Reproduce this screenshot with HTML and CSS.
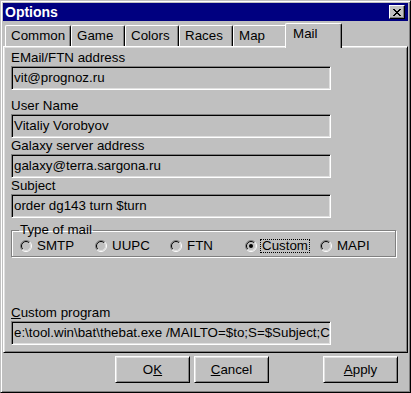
FILE: index.html
```html
<!DOCTYPE html>
<html lang="en">
<head>
  <meta charset="UTF-8">
  <title>Options</title>
  <link rel="stylesheet" href="styles.css">
</head>
<body>
  <div class="window">
    <!-- barra de título -->
    <div class="titlebar">
      <span class="title">Options</span>
      <button class="close">
        <svg width="8" height="7" viewBox="0 0 8 7" shape-rendering="crispEdges">
          <path d="M0 0h2v1h-2zM6 0h2v1h-2zM1 1h2v1h-2zM5 1h2v1h-2zM2 2h4v1h-4zM3 3h2v1h-2zM2 4h4v1h-4zM1 5h2v1h-2zM5 5h2v1h-2zM0 6h2v1h-2zM6 6h2v1h-2z" fill="#000"/>
        </svg>
      </button>
    </div>

    <!-- abas -->
    <div class="tabs">
      <div class="tab">Common</div>
      <div class="tab">Game</div>
      <div class="tab">Colors</div>
      <div class="tab">Races</div>
      <div class="tab">Map</div>
      <div class="tab active">Mail</div>
    </div>

    <div class="panel">
      <div class="label">EMail/FTN address</div>
      <div class="input">vit@prognoz.ru</div>

      <div class="label first-gap">User Name</div>
      <div class="input">Vitaliy Vorobyov</div>

      <div class="label">Galaxy server address</div>
      <div class="input">galaxy@terra.sargona.ru</div>

      <div class="label">Subject</div>
      <div class="input">order dg143 turn $turn</div>

      <fieldset class="group">
        <legend>Type of mail</legend>
        <div class="radios">
          <div class="radio">
            <svg width="12" height="12" viewBox="0 0 12 12">
              <path d="M2.1 9.9A5.5 5.5 0 0 1 9.9 2.1" fill="none" stroke="#808080"/>
              <path d="M9.9 2.1A5.5 5.5 0 0 1 2.1 9.9" fill="none" stroke="#fff"/>
              <path d="M2.8 9.2A4.5 4.5 0 0 1 9.2 2.8" fill="none" stroke="#000"/>
              <path d="M9.2 2.8A4.5 4.5 0 0 1 2.8 9.2" fill="none" stroke="#dfdfdf"/>
            </svg>
            <span>SMTP</span>
          </div>
          <div class="radio">
            <svg width="12" height="12" viewBox="0 0 12 12">
              <path d="M2.1 9.9A5.5 5.5 0 0 1 9.9 2.1" fill="none" stroke="#808080"/>
              <path d="M9.9 2.1A5.5 5.5 0 0 1 2.1 9.9" fill="none" stroke="#fff"/>
              <path d="M2.8 9.2A4.5 4.5 0 0 1 9.2 2.8" fill="none" stroke="#000"/>
              <path d="M9.2 2.8A4.5 4.5 0 0 1 2.8 9.2" fill="none" stroke="#dfdfdf"/>
            </svg>
            <span>UUPC</span>
          </div>
          <div class="radio">
            <svg width="12" height="12" viewBox="0 0 12 12">
              <path d="M2.1 9.9A5.5 5.5 0 0 1 9.9 2.1" fill="none" stroke="#808080"/>
              <path d="M9.9 2.1A5.5 5.5 0 0 1 2.1 9.9" fill="none" stroke="#fff"/>
              <path d="M2.8 9.2A4.5 4.5 0 0 1 9.2 2.8" fill="none" stroke="#000"/>
              <path d="M9.2 2.8A4.5 4.5 0 0 1 2.8 9.2" fill="none" stroke="#dfdfdf"/>
            </svg>
            <span>FTN</span>
          </div>
          <div class="radio">
            <svg width="12" height="12" viewBox="0 0 12 12">
              <path d="M2.1 9.9A5.5 5.5 0 0 1 9.9 2.1" fill="none" stroke="#808080"/>
              <path d="M9.9 2.1A5.5 5.5 0 0 1 2.1 9.9" fill="none" stroke="#fff"/>
              <path d="M2.8 9.2A4.5 4.5 0 0 1 9.2 2.8" fill="none" stroke="#000"/>
              <path d="M9.2 2.8A4.5 4.5 0 0 1 2.8 9.2" fill="none" stroke="#dfdfdf"/>
              <circle cx="6" cy="6" r="2" fill="#000"/>
            </svg>
            <span class="focus">Custom</span>
          </div>
          <div class="radio">
            <svg width="12" height="12" viewBox="0 0 12 12">
              <path d="M2.1 9.9A5.5 5.5 0 0 1 9.9 2.1" fill="none" stroke="#808080"/>
              <path d="M9.9 2.1A5.5 5.5 0 0 1 2.1 9.9" fill="none" stroke="#fff"/>
              <path d="M2.8 9.2A4.5 4.5 0 0 1 9.2 2.8" fill="none" stroke="#000"/>
              <path d="M9.2 2.8A4.5 4.5 0 0 1 2.8 9.2" fill="none" stroke="#dfdfdf"/>
            </svg>
            <span>MAPI</span>
          </div>
        </div>
      </fieldset>

      <div class="label program"><u>C</u>ustom program</div>
      <div class="input">e:\tool.win\bat\thebat.exe /MAILTO=$to;S=$Subject;C</div>
    </div>

    <!-- botões -->
    <div class="buttons">
      <button class="btn">O<u>K</u></button>
      <button class="btn"><u>C</u>ancel</button>
      <button class="btn apply"><u>A</u>pply</button>
    </div>
  </div>
</body>
</html>
```

FILE: styles.css
```css
body {
  margin: 0;
  background: #c0c0c0;
  font-family: "Liberation Sans", Arial, sans-serif;
  font-size: 13.33px;
  color: #000;
}

.window {
  width: 411px;
  height: 393px;
  box-sizing: border-box;
  padding: 2px;
  background: #c0c0c0;
  border: 1px solid;
  border-color: #c0c0c0 #000 #000 #c0c0c0;
  box-shadow: inset 1px 1px #fff, inset -1px -1px #808080;
}

.titlebar {
  height: 18px;
  background: #000080;
  display: flex;
  align-items: flex-start;
  justify-content: space-between;
}

.title {
  color: #fff;
  font-weight: bold;
  font-size: 14px;
  line-height: 18px;
  padding-left: 2px;
}

.close {
  width: 16px;
  height: 14px;
  margin: 2px 3px 0 0;
  padding: 0;
  box-sizing: border-box;
  background: #c0c0c0;
  border: 1px solid;
  border-color: #fff #000 #000 #fff;
  box-shadow: inset -1px -1px #808080;
  display: flex;
  align-items: center;
  justify-content: center;
}

.tabs {
  height: 25px;
  padding-left: 2px;
  display: flex;
  align-items: flex-end;
  position: relative;
  z-index: 1;
}

.tab {
  height: 21px;
  min-width: 54px;
  box-sizing: border-box;
  padding: 0 5px;
  line-height: 20px;
  border-top: 1px solid #fff;
  border-left: 1px solid #fff;
  border-right: 1px solid #000;
  border-radius: 2px 2px 0 0;
  box-shadow: inset -1px 0 #808080;
  background: #c0c0c0;
}

.tab.active {
  height: 25px;
  margin: 0 -2px -2px -2px;
  padding-left: 7px;
  line-height: 19px;
  min-width: 57px;
}

.panel {
  height: 307px;
  box-sizing: border-box;
  padding: 3px 7px 0 7px;
  border: 1px solid;
  border-color: #fff #000 #000 #fff;
  box-shadow: inset 1px 1px #dfdfdf, inset -1px -1px #808080;
}

.label {
  height: 16px;
  line-height: 16px;
}

.label.first-gap {
  margin-top: 8px;
}

.label.program {
  margin-top: 48px;
}

.input {
  width: 320px;
  height: 24px;
  box-sizing: border-box;
  padding: 0 2px;
  line-height: 21px;
  white-space: nowrap;
  overflow: hidden;
  border: 1px solid;
  border-color: #808080 #fff #fff #808080;
  box-shadow: inset 1px 1px #000, inset -1px -1px #dfdfdf;
}

.group {
  width: 385px;
  box-sizing: border-box;
  margin: 4px 0 0 0;
  padding: 0 0 2px 0;
  border: 1px solid #808080;
  box-shadow: inset 1px 1px #fff, 1px 1px #fff;
}

.group legend {
  margin-left: 7px;
  padding: 0 1px;
  line-height: 16px;
}

.radios {
  display: grid;
  grid-template-columns: repeat(5, 75px);
  padding-left: 8px;
}

.radio {
  display: flex;
  align-items: center;
  gap: 5px;
  height: 16px;
  line-height: 16px;
}

.radio svg {
  flex: none;
}

.focus {
  outline: 1px dotted #000;
  line-height: 12px;
  display: inline-block;
  padding: 0 1px;
  margin-left: -1px;
}

.buttons {
  display: flex;
  justify-content: flex-end;
  gap: 4px;
  margin-top: 3px;
  padding-right: 10px;
}

.btn {
  width: 75px;
  height: 27px;
  box-sizing: border-box;
  padding: 0;
  font-family: "Liberation Sans", Arial, sans-serif;
  font-size: 13.33px;
  line-height: 25px;
  color: #000;
  background: #c0c0c0;
  border: 1px solid;
  border-color: #fff #000 #000 #fff;
  box-shadow: inset 1px 1px #dfdfdf, inset -1px -1px #808080;
}

.btn.apply {
  margin-left: 50px;
}
```
